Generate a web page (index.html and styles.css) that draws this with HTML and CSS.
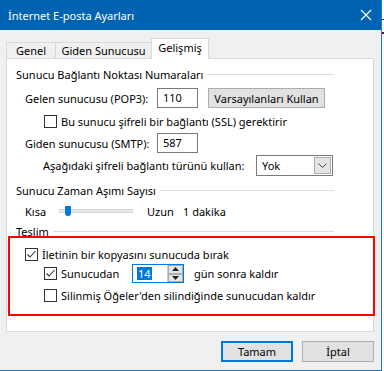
FILE: index.html
```html
<!DOCTYPE html>
<html lang="tr">

<head>
    <meta charset="UTF-8" />
    <title>İnternet E-posta Ayarları</title>
    <link rel="stylesheet" href="styles.css">
</head>

<body>
    <div class="window">
        <div class="titlebar">
            <span class="title">İnternet E-posta Ayarları</span>
            <svg class="close" width="12" height="12" viewBox="0 0 12 12">
                <path d="M1 1 L11 11 M11 1 L1 11" stroke="#fff" stroke-width="1.2" fill="none" />
            </svg>
        </div>
        <div class="client">
            <div class="tabs">
                <div class="tab tab-genel">Genel</div>
                <div class="tab tab-giden">Giden Sunucusu</div>
                <div class="tab tab-active">Gelişmiş</div>
            </div>
            <div class="panel">
                <div class="group-head head-ports">
                    <span>Sunucu Bağlantı Noktası Numaraları</span>
                    <span class="rule"></span>
                </div>
                <div class="row row-pop">
                    <span class="label">Gelen sunucusu (POP3):</span>
                    <span class="textbox">110</span>
                    <span class="btn btn-defaults">Varsayılanları Kullan</span>
                </div>
                <div class="row row-ssl">
                    <span class="check"></span>
                    <span>Bu sunucu şifreli bir bağlantı (SSL) gerektirir</span>
                </div>
                <div class="row row-smtp">
                    <span class="label">Giden sunucusu (SMTP):</span>
                    <span class="textbox">587</span>
                </div>
                <div class="row row-enc">
                    <span class="label-enc">Aşağıdaki şifreli bağlantı türünü kullan:</span>
                    <span class="combo">
                        <span class="combo-text">Yok</span>
                        <span class="combo-btn">
                            <svg width="9" height="6" viewBox="0 0 9 6">
                                <path d="M0.5 0.5 L4.5 4.5 L8.5 0.5" stroke="#444" stroke-width="1" fill="none" />
                            </svg>
                        </span>
                    </span>
                </div>
                <div class="group-head head-timeout">
                    <span>Sunucu Zaman Aşımı Sayısı</span>
                    <span class="rule"></span>
                </div>
                <div class="row row-slider">
                    <span class="label-short">Kısa</span>
                    <span class="slider">
                        <span class="track"></span>
                        <span class="thumb"></span>
                    </span>
                    <span class="label-long">Uzun</span>
                    <span>1 dakika</span>
                </div>
                <div class="group-head head-delivery">
                    <span>Teslim</span>
                    <span class="rule"></span>
                </div>
                <div class="highlight">
                    <div class="row row-keep">
                        <span class="check checked">
                            <svg width="11" height="11" viewBox="0 0 11 11">
                                <path d="M1.5 5.5 L4 8 L9.5 2" stroke="#333" stroke-width="1.1" fill="none" />
                            </svg>
                        </span>
                        <span>İletinin bir kopyasını sunucuda bırak</span>
                    </div>
                    <div class="row row-remove">
                        <span class="check checked">
                            <svg width="11" height="11" viewBox="0 0 11 11">
                                <path d="M1.5 5.5 L4 8 L9.5 2" stroke="#333" stroke-width="1.1" fill="none" />
                            </svg>
                        </span>
                        <span class="label-remove">Sunucudan</span>
                        <span class="spin">
                            <span class="spin-text"><span class="selected">14</span></span>
                            <span class="spin-btns">
                                <span class="spin-btn">
                                    <svg width="7" height="4" viewBox="0 0 7 4"><path d="M0 4 L3.5 0 L7 4 Z" fill="#222" /></svg>
                                </span>
                                <span class="spin-btn">
                                    <svg width="7" height="4" viewBox="0 0 7 4"><path d="M0 0 L3.5 4 L7 0 Z" fill="#222" /></svg>
                                </span>
                            </span>
                        </span>
                        <span>gün sonra kaldır</span>
                    </div>
                    <div class="row row-deleted">
                        <span class="check"></span>
                        <span>Silinmiş Öğeler'den silindiğinde sunucudan kaldır</span>
                    </div>
                </div>
            </div>
            <div class="footer">
                <span class="btn btn-ok">Tamam</span>
                <span class="btn btn-cancel">İptal</span>
            </div>
        </div>
    </div>
    <div class="behind">
        <span class="mark mark-a"></span>
        <span class="mark mark-b"></span>
    </div>
</body>

</html>
```

FILE: styles.css
```css
* {
    margin: 0;
    padding: 0;
    box-sizing: border-box;
}

body {
    display: flex;
    width: 384px;
    height: 371px;
    overflow: hidden;
    background: #fff;
    font-family: 'Noto Sans', sans-serif;
    font-size: 11px;
    color: #000;
}

.window {
    width: 382px;
    height: 371px;
    border-right: 1px solid #1a7acb;
    border-bottom: 1px solid #1a7acb;
    display: flex;
    flex-direction: column;
}

.titlebar {
    height: 30px;
    background: #0063b1;
    color: #fff;
    display: flex;
    align-items: center;
    justify-content: space-between;
    padding: 0 8px 0 8px;
}

.title {
    font-size: 11px;
}

.close {
    margin-right: 1px;
}

.client {
    flex: 1;
    background: #f0f0f0;
    display: flex;
    flex-direction: column;
}

/* tabs */

.tabs {
    display: flex;
    align-items: flex-end;
    height: 21px;
    margin-top: 8px;
    padding-left: 6px;
    margin-bottom: -1px;
}

.tab {
    height: 17px;
    border: 1px solid #d9d9d9;
    border-bottom: none;
    background: #f0f0f0;
    display: flex;
    align-items: center;
    justify-content: center;
    line-height: 14px;
}

.tab-genel {
    width: 50px;
}

.tab-giden {
    width: 97px;
    margin-left: -1px;
}

.tab-active {
    width: 58px;
    height: 21px;
    margin-left: -1px;
    background: #fff;
    position: relative;
    z-index: 1;
    padding-bottom: 3px;
}

.panel {
    width: 368px;
    height: 274px;
    margin-left: 6px;
    background: #fff;
    border: 1px solid #d9d9d9;
    padding: 0 39px 0 9px;
    display: flex;
    flex-direction: column;
}

/* group boxes */

.group-head {
    display: flex;
    align-items: center;
    height: 16px;
    line-height: 16px;
    white-space: nowrap;
}

.group-head .rule {
    flex: 1;
    height: 1px;
    background: #dcdcdc;
    margin-left: 4px;
    margin-top: -2px;
}

.head-ports {
    margin-top: 8px;
}

.head-timeout {
    margin-top: 7px;
}

.head-delivery {
    margin-top: 5px;
}

.row {
    display: flex;
    align-items: center;
    white-space: nowrap;
}

.row-pop {
    height: 20px;
    margin-top: 5px;
    padding-left: 9px;
}

.label {
    width: 132px;
}

.textbox {
    width: 41px;
    height: 20px;
    border: 1px solid #7a7a7a;
    background: #fff;
    padding-left: 5px;
    line-height: 18px;
}

.btn {
    display: flex;
    align-items: center;
    justify-content: center;
    background: #e1e1e1;
    border: 1px solid #adadad;
}

.btn-defaults {
    width: 117px;
    height: 20px;
    margin-left: 10px;
}

.row-ssl {
    height: 14px;
    margin-top: 6px;
    padding-left: 28px;
}

.check {
    width: 13px;
    height: 13px;
    border: 1px solid #333;
    background: #fff;
    margin-right: 4px;
    display: flex;
    align-items: center;
    justify-content: center;
    flex-shrink: 0;
}

.row-smtp {
    height: 20px;
    margin-top: 5px;
    padding-left: 9px;
}

.row-enc {
    height: 21px;
    margin-top: 2px;
    padding-left: 27px;
}

.label-enc {
    width: 213px;
}

.combo {
    width: 77px;
    height: 21px;
    border: 1px solid #7a7a7a;
    background: #fff;
    display: flex;
    align-items: center;
    justify-content: space-between;
    padding: 1px;
}

.combo-text {
    padding-left: 4px;
}

.combo-btn {
    width: 17px;
    height: 17px;
    background: #e5e5e5;
    border: 1px solid #acacac;
    display: flex;
    align-items: center;
    justify-content: center;
}

.row-slider {
    height: 16px;
    margin-top: 4px;
    padding-left: 9px;
}

.label-short {
    width: 34px;
}

.slider {
    width: 74px;
    height: 14px;
    position: relative;
    display: flex;
    align-items: center;
}

.track {
    width: 100%;
    height: 4px;
    background: #e7eaea;
    border: 1px solid #d6d6d6;
}

.thumb {
    position: absolute;
    left: 6px;
    top: 2px;
    width: 6px;
    height: 10px;
    background: #0078d7;
    border-radius: 1px 1px 3px 3px;
}

.label-long {
    margin-left: 14px;
    width: 36px;
}

/* red annotation box */

.highlight {
    margin: -4px -41px 0 -8px;
    height: 80px;
    border: 2px solid #ff0000;
    padding-top: 8px;
    display: flex;
    flex-direction: column;
}

.row-keep {
    height: 16px;
    padding-left: 15px;
}

.row-remove {
    height: 19px;
    margin-top: 2px;
    padding-left: 34px;
}

.label-remove {
    width: 71px;
}

.spin {
    width: 52px;
    height: 19px;
    border: 1px solid #0078d7;
    background: #fff;
    display: flex;
    margin-right: 10px;
}

.spin-text {
    flex: 1;
    display: flex;
    align-items: center;
    padding-left: 4px;
}

.selected {
    background: #0078d7;
    color: #fff;
    line-height: 13px;
    padding: 0 1px;
}

.spin-btns {
    width: 16px;
    display: flex;
    flex-direction: column;
    border-left: 1px solid #ccc;
}

.spin-btn {
    flex: 1;
    background: #e5e5e5;
    border: 1px solid #acacac;
    display: flex;
    align-items: center;
    justify-content: center;
}

.row-deleted {
    height: 16px;
    margin-top: 4px;
    padding-left: 34px;
}

/* footer buttons */

.footer {
    display: flex;
    justify-content: flex-end;
    gap: 9px;
    margin-top: 9px;
    padding-right: 7px;
}

.btn-ok {
    width: 72px;
    height: 21px;
    border: 2px solid #0078d7;
}

.btn-cancel {
    width: 72px;
    height: 21px;
}

/* window behind */

.behind {
    flex: 1;
    display: flex;
    flex-direction: column;
}

.mark {
    height: 1px;
    background: #333;
}

.mark-a {
    margin-top: 19px;
}

.mark-b {
    margin-top: 12px;
    height: 2px;
    background: #5a1030;
}
```
